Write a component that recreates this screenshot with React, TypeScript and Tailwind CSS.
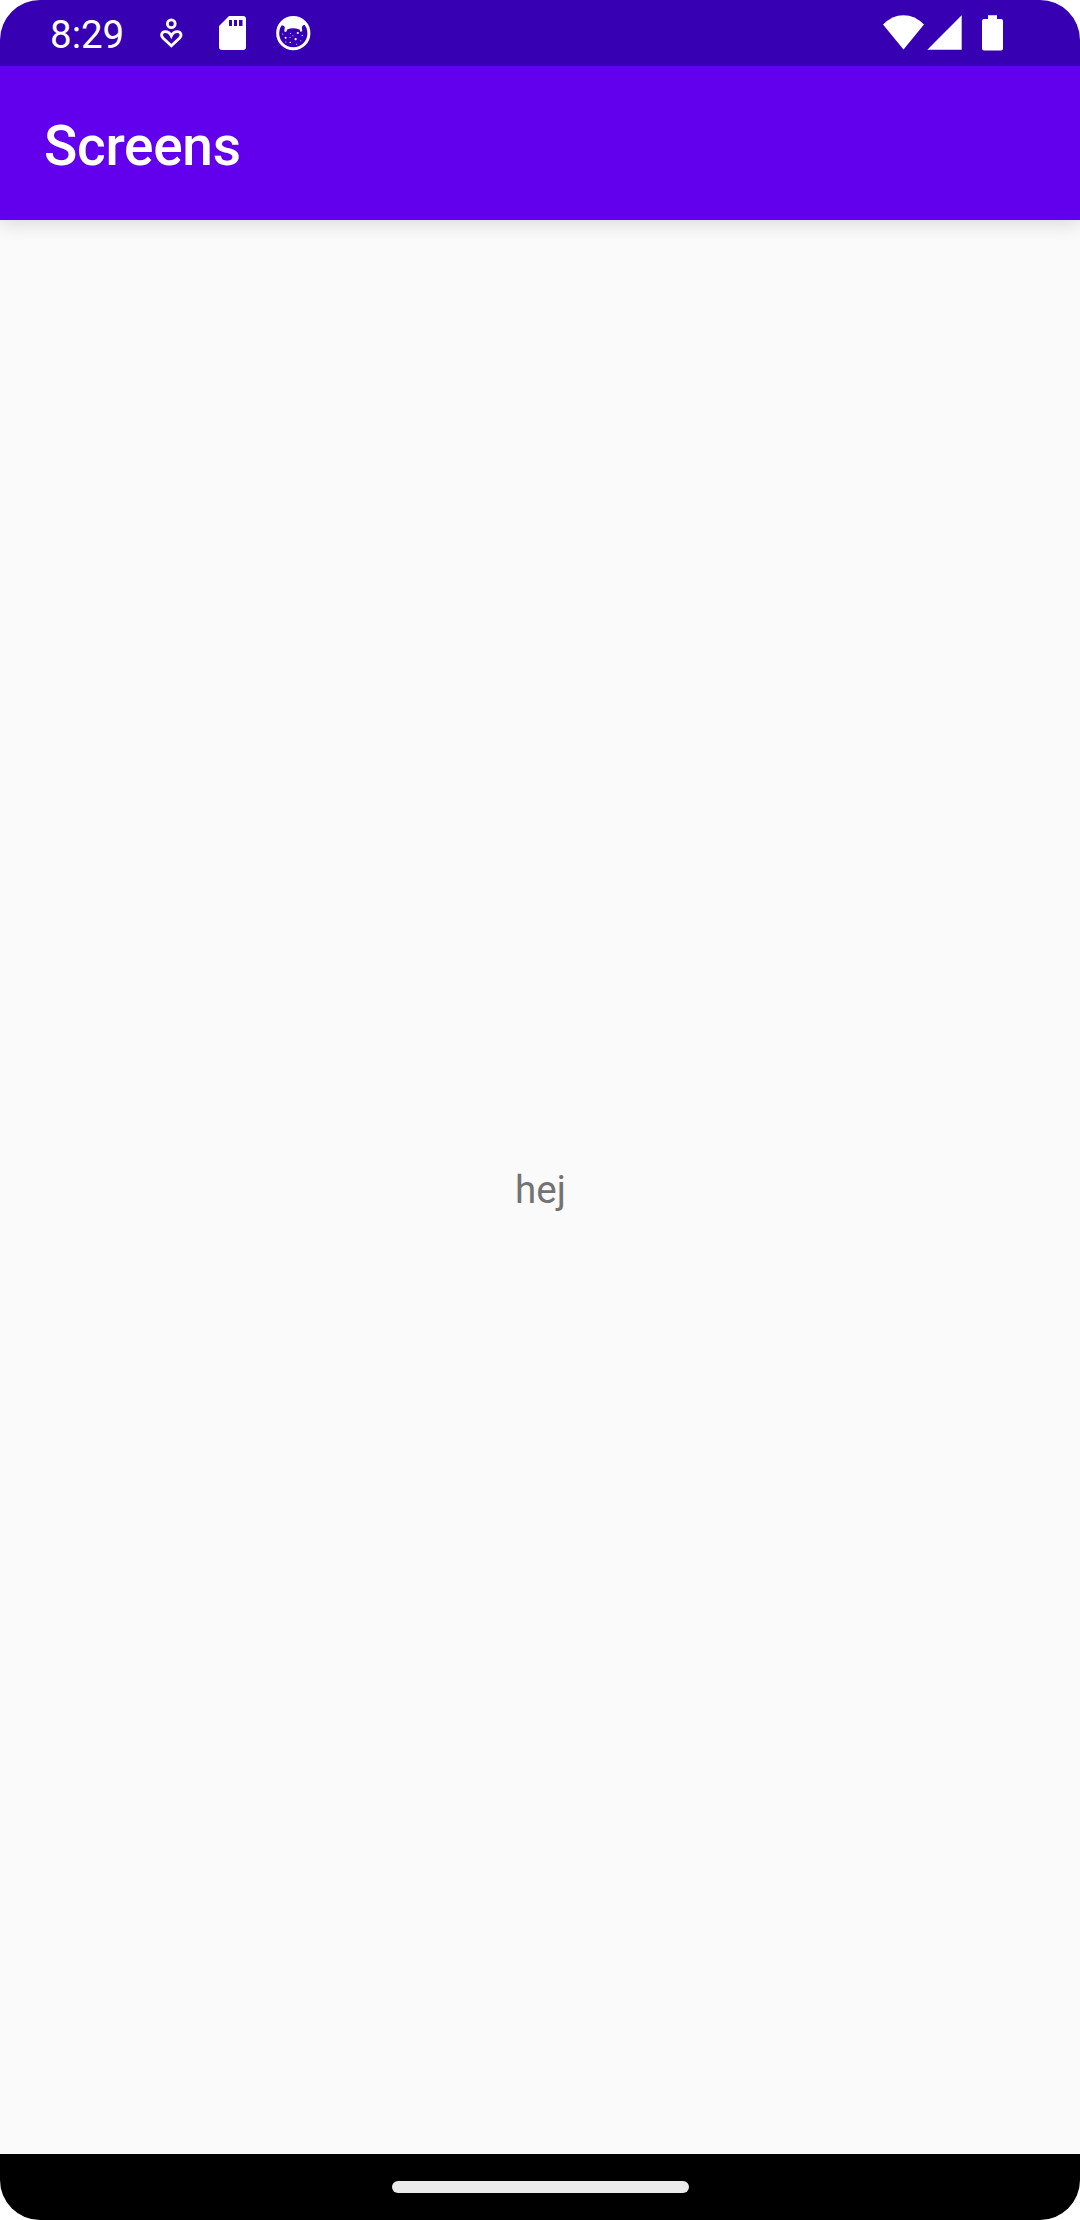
function PersonHeartIcon() {
  return (
    <svg className="ml-[37px] h-[34px] w-[24px] shrink-0" viewBox="0 0 24 34" fill="none" stroke="white" strokeWidth="2.8">
      <circle cx="12.3" cy="7.7" r="3.9" />
      <path d="M12.3 29.8 L4.2 22.3 C1.1 19.2 3 15.7 6.2 15.7 C9.2 15.7 11.2 17.6 12.3 19.9 C13.4 17.6 15.4 15.7 18.4 15.7 C21.6 15.7 23.5 19.2 20.4 22.3 Z" />
    </svg>
  );
}

function SdCardIcon() {
  return (
    <svg className="ml-[36px] h-[36px] w-[27px] shrink-0" viewBox="0 0 27 36" fill="white">
      <path
        fillRule="evenodd"
        d="M10 1 H24 Q27 1 27 4 V32 Q27 35 24 35 H3 Q0 35 0 32 V11 Z M10 5 V11 H13 V5 Z M15 5 V11 H18 V5 Z M20 5 V11 H23.5 V5 Z"
      />
    </svg>
  );
}

function DebugFaceIcon() {
  return (
    <svg className="ml-[29px] h-[36px] w-[36px] shrink-0" viewBox="0 0 36 36">
      <circle cx="18.3" cy="18.2" r="15.6" fill="none" stroke="white" strokeWidth="3" />
      <path
        fill="white"
        d="M5.4 10.4 C11 0.6 25.8 0.6 31.2 10.4 L29.6 9.8 Q27.2 10 26.8 12.6 L27.3 16.2 L25.4 16.8 L24.5 14.6 Q18.3 12.3 12.5 14.2 L11 17 L9.3 16.4 L9.8 12 Q8.6 9.8 5.4 10.4 Z"
      />
      <g fill="white">
        <circle cx="22.8" cy="18" r="1.1" />
        <circle cx="10.6" cy="22.8" r="1" />
        <circle cx="20.6" cy="24.2" r="1.1" />
        <circle cx="27.2" cy="20.4" r="0.6" />
        <circle cx="15.4" cy="18.5" r="0.5" />
        <circle cx="7.7" cy="19" r="0.6" />
        <circle cx="15.2" cy="27.4" r="0.7" />
        <circle cx="25.8" cy="25.7" r="0.5" />
        <circle cx="15" cy="22.5" r="0.5" />
        <circle cx="21.6" cy="29.2" r="0.5" />
        <circle cx="10.8" cy="27" r="0.5" />
        <circle cx="17.9" cy="20.8" r="0.5" />
      </g>
    </svg>
  );
}

function WifiIcon() {
  return (
    <svg className="h-[36px] w-[42px] shrink-0" viewBox="0 0 42 36" fill="white">
      <path d="M20.5 34.6 L0 9.6 Q9 0.2 20.5 0.2 T41 9.6 Z" />
    </svg>
  );
}

function SignalIcon() {
  return (
    <svg className="ml-[2px] h-[36px] w-[35px] shrink-0" viewBox="0 0 35 36" fill="white">
      <path d="M34.7 0.3 V34.7 H0.3 Z" />
    </svg>
  );
}

function BatteryIcon() {
  return (
    <svg className="ml-5 h-[36px] w-[21px] shrink-0" viewBox="0 0 21 36" fill="white">
      <path d="M6 0.2 H15 V4 H19 Q21 4 21 6 V33.6 Q21 35.6 19 35.6 H2 Q0 35.6 0 33.6 V6 Q0 4 2 4 H6 Z" />
    </svg>
  );
}

export default function App() {
  return (
    <div className="h-[2220px] w-[1080px] bg-white font-['Roboto',sans-serif]">
      <div className="flex h-full flex-col overflow-hidden rounded-[40px] bg-[#fafafa]">
        <header className="z-10 shrink-0 shadow-[0_5px_17px_rgba(0,0,0,0.12)]">
          <div className="flex h-[66px] items-center justify-between bg-[#3700b3] pl-[50px] pr-[77px] text-white">
            <div className="flex items-center">
              <span className="w-[72px] whitespace-nowrap pt-[2px] text-[38.5px] leading-[45px]">8:29</span>
              <PersonHeartIcon />
              <SdCardIcon />
              <DebugFaceIcon />
            </div>
            <div className="flex items-center">
              <WifiIcon />
              <SignalIcon />
              <BatteryIcon />
            </div>
          </div>
          <div className="flex h-[154px] items-center bg-[#6200ee] px-[44px] pt-[6px]">
            <h1 className="text-[55px] font-medium leading-[64px] tracking-[-0.3px] text-white">Screens</h1>
          </div>
        </header>
        <main className="flex flex-1 items-center justify-center pl-px pt-[5px]">
          <p className="text-[38.5px] leading-[45px] text-[#737373]">hej</p>
        </main>
        <nav className="flex h-[66px] shrink-0 justify-center bg-black pt-[27px]">
          <div className="h-[11.5px] w-[297px] rounded-full bg-[#ebebeb]" />
        </nav>
      </div>
    </div>
  );
}
